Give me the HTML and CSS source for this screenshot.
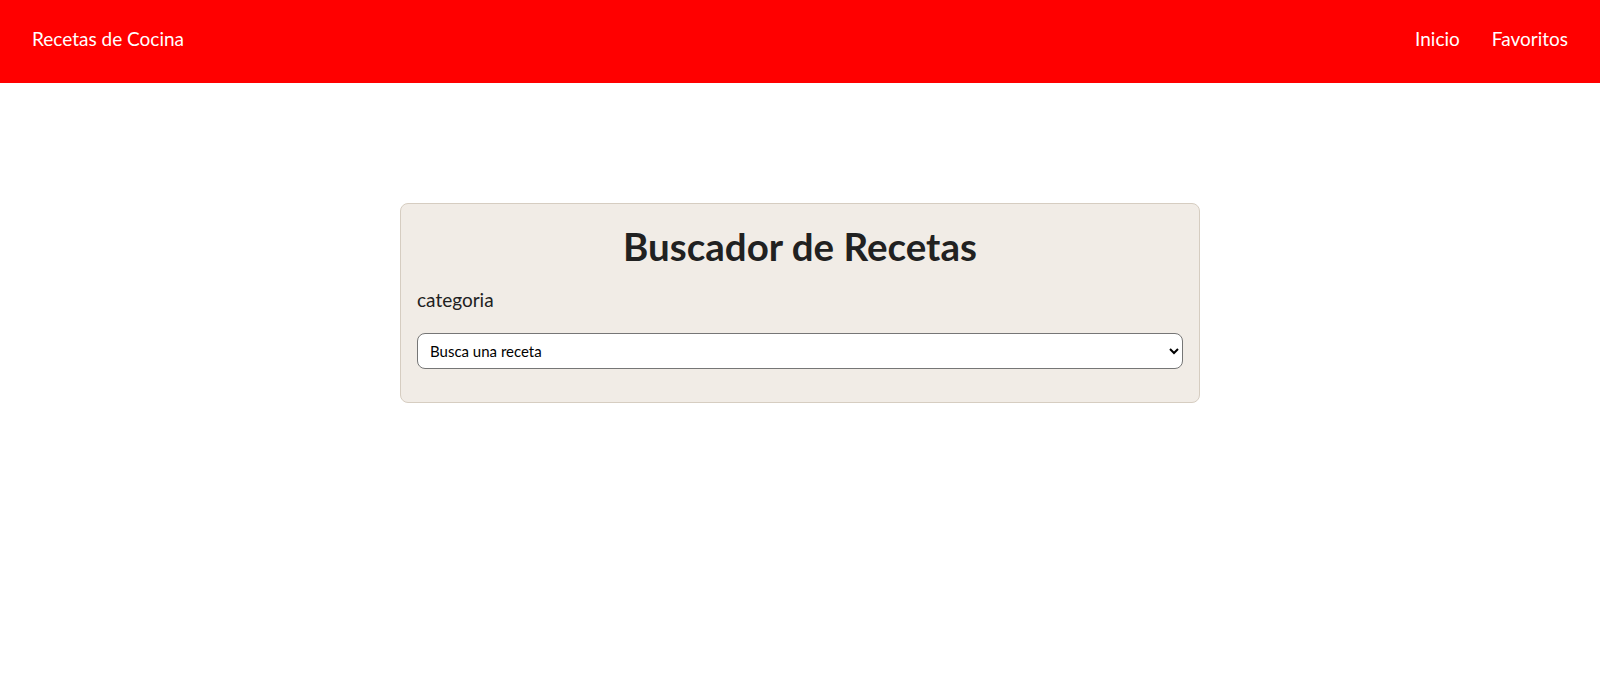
FILE: index.html
```html
<!DOCTYPE html>
<html lang="es">
<head>
<meta charset="utf-8">
<title>Recetas de Cocina</title>
<link rel="stylesheet" href="styles.css">
</head>
<body>
<header class="topbar">
  <a class="brand" href="#">Recetas de Cocina</a>
  <nav class="nav">
    <a href="#">Inicio</a>
    <a href="#">Favoritos</a>
  </nav>
</header>
<main class="main">
  <section class="card">
    <h1 class="title">Buscador de Recetas</h1>
    <label class="label" for="categoria">categoria</label>
    <select id="categoria" class="select">
      <option>Busca una receta</option>
    </select>
  </section>
</main>
</body>
</html>
```
FILE: styles.css
```css
* { box-sizing: border-box; }
body {
  margin: 0;
  font-family: Lato, "Open Sans", sans-serif;
  color: #212121;
  background: #fff;
}
.topbar {
  height: 83px;
  background: #ff0000;
  display: flex;
  align-items: center;
  justify-content: space-between;
  padding: 0 32px 6px;
}
.brand {
  color: #fff;
  text-decoration: none;
  font-size: 19px;
}
.nav {
  display: flex;
  gap: 32px;
}
.nav a {
  color: #fff;
  text-decoration: none;
  font-size: 19px;
}
.main {
  display: flex;
  justify-content: center;
  padding-top: 120px;
}
.card {
  width: 800px;
  background: #f1ece6;
  border: 1px solid #d6cdc1;
  border-radius: 8px;
  padding: 16px 16px 33px;
  display: flex;
  flex-direction: column;
}
.title {
  margin: 0 0 16px;
  text-align: center;
  font-size: 38.5px;
  font-weight: 700;
  line-height: 52px;
}
.label {
  font-size: 19px;
  margin-bottom: 22px;
}
.select {
  height: 36px;
  border: 1px solid #767676;
  border-radius: 8px;
  background: #fff;
  font-family: inherit;
  font-size: 15px;
  padding: 0 8px;
  color: #000;
}
```
